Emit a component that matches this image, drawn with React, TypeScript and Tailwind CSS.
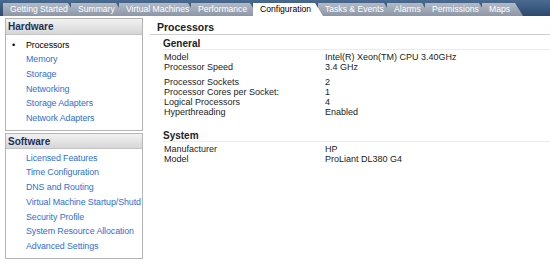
import React from "react";

const tabs = [
  { label: "Getting Started", w: 73 },
  { label: "Summary", w: 53 },
  { label: "Virtual Machines", w: 77 },
  { label: "Performance", w: 67 },
  { label: "Configuration", w: 70, active: true },
  { label: "Tasks & Events", w: 74 },
  { label: "Alarms", w: 43 },
  { label: "Permissions", w: 62 },
  { label: "Maps", w: 41 },
];

const hardware = ["Processors", "Memory", "Storage", "Networking", "Storage Adapters", "Network Adapters"];
const software = [
  "Licensed Features",
  "Time Configuration",
  "DNS and Routing",
  "Virtual Machine Startup/Shutd",
  "Security Profile",
  "System Resource Allocation",
  "Advanced Settings",
];

function Panel({ title, items, active, big }: { title: string; items: string[]; active?: string; big?: boolean }) {
  return (
    <div className="border border-[#b4b4b4] bg-white overflow-hidden">
      <div
        className={
          "flex items-center pl-[2px] bg-gradient-to-b from-[#f2f2f2] to-[#d6d6d6] border-b border-[#c4c4c4] text-[10px] font-bold text-[#1c3158] " +
          (big ? "h-[16px]" : "h-[15px]")
        }
      >
        {title}
      </div>
      <div className={big ? "pt-[3px] pb-[4px]" : "pt-[2px] pb-[4px]"}>
        {items.map((it) => (
          <div key={it} className="h-[14.7px] flex items-center whitespace-nowrap text-[8.9px] tracking-[-0.1px]">
            <span className="w-[20px] shrink-0 pl-[6px] text-black text-[9px]">{it === active ? "•" : ""}</span>
            <span className={it === active ? "text-black" : "text-[#2f6fd3]"}>{it}</span>
          </div>
        ))}
      </div>
    </div>
  );
}

function Row({ k, v }: { k: string; v: string }) {
  return (
    <div className="flex h-[10px] items-center text-[9px] text-[#222]">
      <div className="w-[161px] shrink-0">{k}</div>
      <div className="whitespace-nowrap">{v}</div>
    </div>
  );
}

export default function App() {
  return (
    <div className="w-[550px] h-[273px] bg-white overflow-hidden" style={{ fontFamily: '"Liberation Sans", Arial, sans-serif' }}>
      <div className="h-[16px] bg-gradient-to-b from-[#4a6a90] to-[#2c4a6e] flex items-end pl-[3px]">
        {tabs.map((t, i) => (
          <div
            key={t.label}
            className={
              "h-[13px] flex items-center pl-[7px] text-[8.6px] whitespace-nowrap " +
              (t.active
                ? "bg-white text-black relative z-10"
                : "bg-gradient-to-b from-[#b3bac6] to-[#8c96a6] text-white")
            }
            style={{
              width: t.w,
              marginLeft: i === 0 ? 0 : -5,
              clipPath: "polygon(0 0, calc(100% - 8px) 0, 100% 100%, 0 100%)",
            }}
          >
            {t.label}
          </div>
        ))}
      </div>
      <div className="flex">
        <div className="w-[143px] shrink-0 pl-[5px] pt-[2px] flex flex-col gap-[2px]">
          <Panel title="Hardware" items={hardware} active="Processors" big />
          <Panel title="Software" items={software} />
        </div>
        <div className="flex-1 pl-[7px] pt-[5px]">
          <div className="h-[14px] flex items-center pl-[7px] text-[10.5px] font-bold text-[#222] border-b border-[#cfcfcf]">
            Processors
          </div>
          <div className="pl-[13px] pt-[3px]">
            <div className="h-[12px] flex items-center text-[10px] font-bold text-[#222] border-b border-[#ececec]">General</div>
            <div className="pl-[1px] pt-[3px]">
              <Row k="Model" v="Intel(R) Xeon(TM) CPU 3.40GHz" />
              <Row k="Processor Speed" v="3.4 GHz" />
              <div className="h-[5px]" />
              <Row k="Processor Sockets" v="2" />
              <Row k="Processor Cores per Socket:" v="1" />
              <Row k="Logical Processors" v="4" />
              <Row k="Hyperthreading" v="Enabled" />
            </div>
            <div className="h-[12px] mt-[12px] flex items-center text-[10px] font-bold text-[#222] border-b border-[#ececec]">System</div>
            <div className="pl-[1px] pt-[3px]">
              <Row k="Manufacturer" v="HP" />
              <Row k="Model" v="ProLiant DL380 G4" />
            </div>
          </div>
        </div>
      </div>
    </div>
  );
}
